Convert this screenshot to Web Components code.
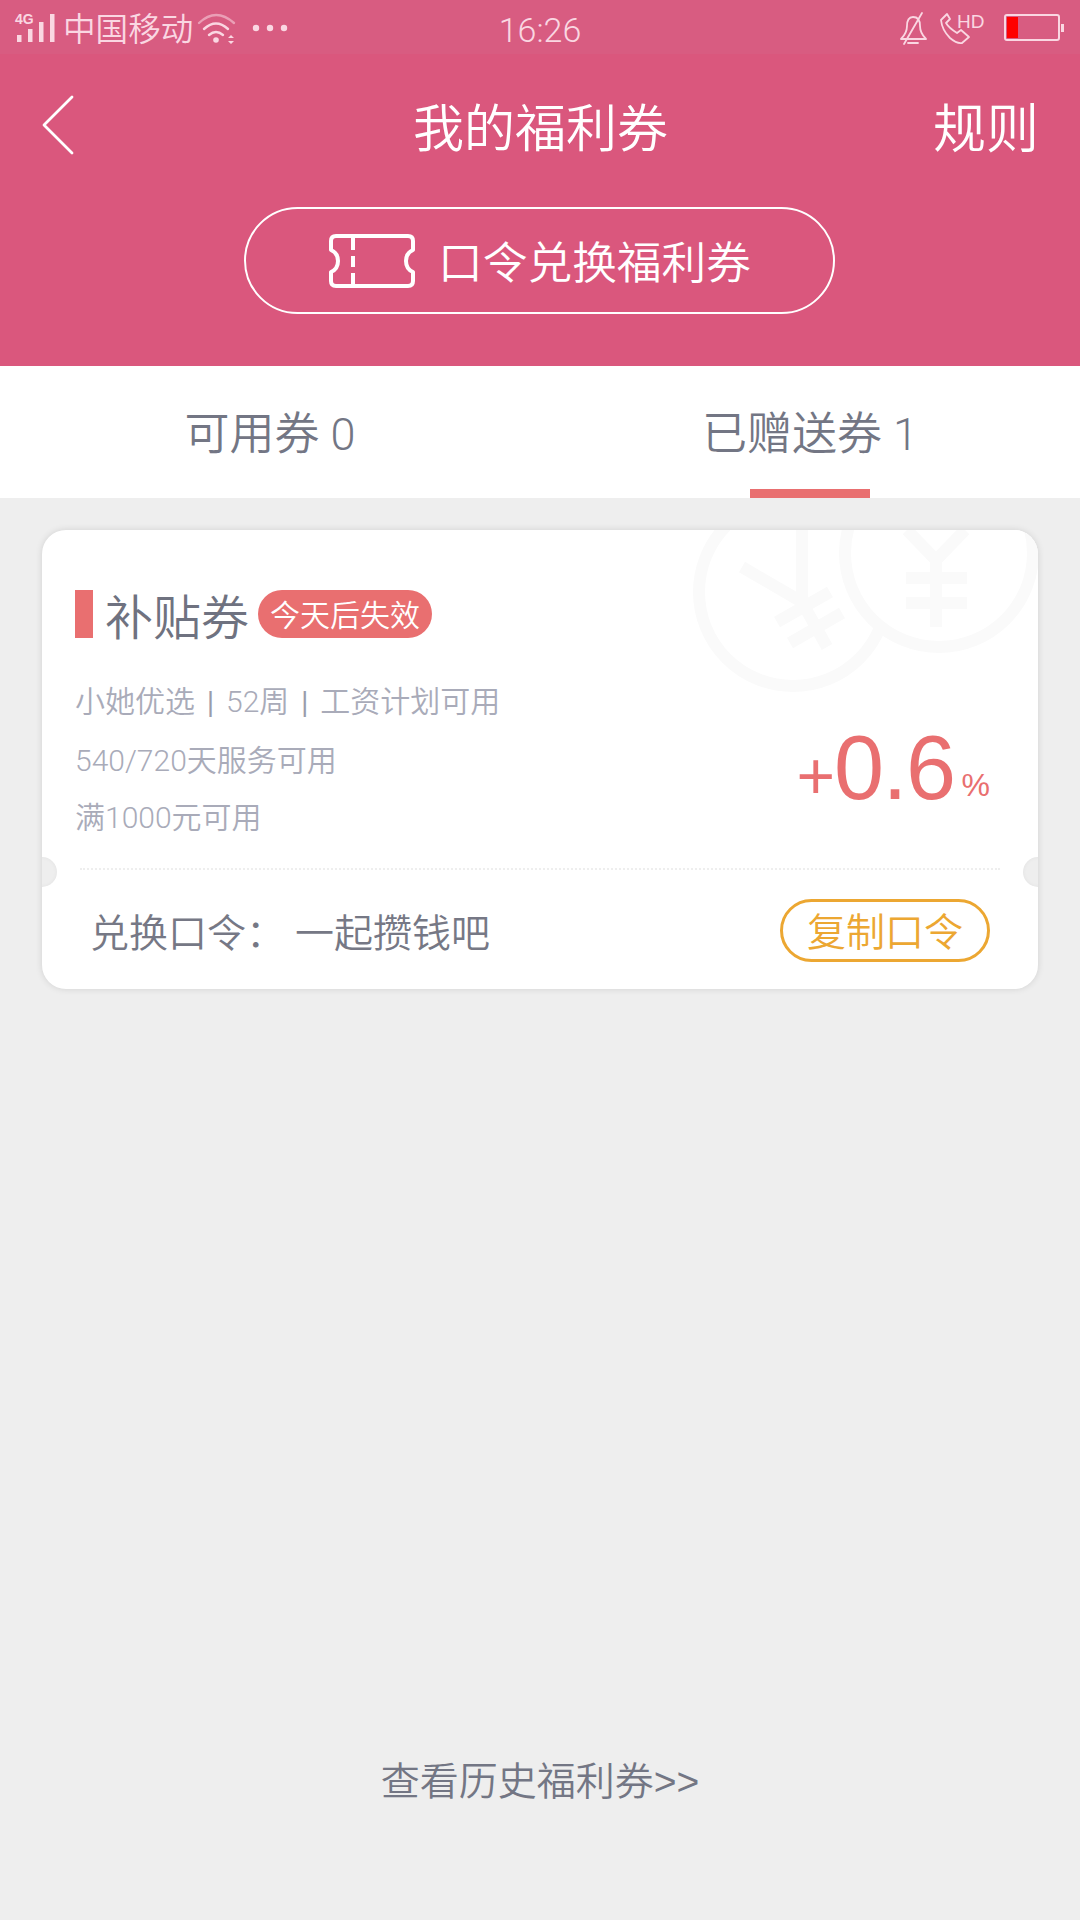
<!DOCTYPE html>
<html lang="zh"><head><meta charset="utf-8"><title>我的福利券</title>
<style>
html,body{margin:0;padding:0;background:#eeeeee}
body{width:1080px;height:1920px;overflow:hidden;font-family:"Noto Sans CJK SC","Noto Sans",sans-serif}
</style></head><body>
<coupon-page>
  <page-header title-text="我的福利券" action="规则" redeem="口令兑换福利券"></page-header>
  <tab-bar></tab-bar>
  <coupon-card></coupon-card>
  <history-link>查看历史福利券&gt;&gt;</history-link>
</coupon-page>
<script>
const def=(name,html)=>customElements.define(name,class extends HTMLElement{
  constructor(){super();this.attachShadow({mode:'open'}).innerHTML=typeof html==='function'?html(this):html}
});
const CJK='"Noto Sans CJK SC",sans-serif';
const MIX='Roboto,"Noto Sans CJK SC",sans-serif';
def('coupon-page',`<style>:host{display:flex;flex-direction:column;width:1080px;height:1920px}</style><slot></slot>`);

def('status-bar',`<style>
:host{display:grid;grid-template-columns:1fr auto 1fr;align-items:center;height:54px;background:#d85c81;color:#fad7e2}
.l,.r{display:flex;align-items:center;height:54px}
.r{justify-content:flex-end}
.car{font:350 32.6px/54px ${CJK};margin:0 0 0 8px;width:128px;white-space:nowrap}
.t{font:300 34px/54px Roboto,"Liberation Sans",sans-serif;position:relative;top:3px}
svg{display:block;flex:none;overflow:visible}
</style>
<div class="l">
 <svg width="55" height="54" viewBox="0 0 55 54" fill="currentColor"><text x="15" y="24" font-family="Liberation Sans" font-size="14" font-weight="700">4G</text><rect x="17" y="35" width="4.5" height="7"/><rect x="28" y="29" width="4.5" height="13"/><rect x="39" y="22" width="4.5" height="20"/><rect x="50" y="14" width="4.5" height="28"/></svg>
 <span class="car">中国移动</span>
 <svg style="margin-left:7px" width="40" height="54" viewBox="200 0 40 54" fill="none" stroke="currentColor" stroke-width="2.4" stroke-linecap="round"><path d="M201 23Q218 7 236 23" opacity=".55"/><path d="M206 29Q218 18 230 29"/><path d="M211 35Q218 29 225 35"/><circle cx="218" cy="40" r="2.8" fill="currentColor" stroke="none"/><path d="M230 38h6l-3-3zM230 41h6l-3 3z" fill="currentColor" stroke="none"/></svg>
 <svg style="margin-left:15px" width="34" height="54" viewBox="253 0 34 54" fill="currentColor"><circle cx="256" cy="28" r="3.2"/><circle cx="270" cy="28" r="3.2"/><circle cx="284" cy="28" r="3.2"/></svg>
</div>
<div class="t">16:26</div>
<div class="r">
 <svg width="30" height="54" viewBox="899 0 30 54" fill="none" stroke="currentColor" stroke-width="1.8" stroke-linejoin="round" stroke-linecap="round"><path d="M902 39Q908 33 908 26Q908 17 914 17Q921 17 921 26Q921 33 927 39Z"/><path d="M909 43h10"/><path d="M905 44L923 13"/></svg>
 <svg style="margin-left:12px" width="42" height="54" viewBox="941 0 42 54" fill="none" stroke="currentColor" stroke-width="1.8" stroke-linejoin="round"><path d="M948 14L942 20Q943 30 951 38Q958 44 963 43L970 37L962 30L958 33Q950 28 947 23L951 19Z"/><text x="958" y="28" fill="currentColor" stroke="none" font-family="Liberation Sans" font-size="19">HD</text></svg>
 <svg style="margin:0 14px 0 22px" width="62" height="54" viewBox="1004 0 62 54"><rect x="1005" y="15" width="54" height="25" rx="2" fill="none" stroke="#fad7e2" stroke-width="2"/><rect x="1007" y="17" width="11" height="21" fill="#ff0000"/><rect x="1061" y="24" width="3" height="8" fill="#fad7e2"/></svg>
</div>`);

def('page-header',h=>`<style>
:host{display:block;background:#da577d;color:#fff;height:366px}
.nav{display:grid;grid-template-columns:1fr auto 1fr;align-items:center;height:142px;padding:0 41px 0 42px}
h1{margin:0;font:350 51px/1 ${CJK}}
.rule{justify-self:end;font:350 53px/1 ${CJK}}
svg{display:block}
.redeem{box-sizing:border-box;width:591px;height:107px;margin:11px 0 0 244px;border:2px solid #fff;border-radius:54px;display:flex;align-items:center;justify-content:center;gap:22px;font:350 44.7px/1 ${CJK}}
</style>
<status-bar></status-bar>
<div class="nav">
 <svg width="32" height="60" viewBox="0 0 32 60" fill="none" stroke="#fff" stroke-width="2.8" stroke-linecap="round" stroke-linejoin="round"><path d="M30 2L2 30L30 58"/></svg>
 <h1>${h.getAttribute('title-text')}</h1>
 <span class="rule">${h.getAttribute('action')}</span>
</div>
<div class="redeem">
 <svg width="88" height="56" viewBox="0 0 88 56" fill="none" stroke="#fff" stroke-width="4" stroke-linejoin="round"><path d="M8 3H80Q85 3 85 8V17Q78 20 78 28Q78 36 85 39V48Q85 53 80 53H8Q3 53 3 48V39Q10 36 10 28Q10 20 3 17V8Q3 3 8 3Z"/><path d="M25 4V17M25 23V34M25 40V52"/></svg>
 <span>${h.getAttribute('redeem')}</span>
</div>`);

def('tab-bar',`<style>
:host{display:grid;grid-template-columns:1fr 1fr;height:132px;background:#fff;color:#737684;font:350 45px/1 ${MIX}}
.tab{position:relative;display:flex;align-items:center;justify-content:center;box-sizing:border-box;padding-top:4px}
.on::after{content:"";position:absolute;left:210px;bottom:0;width:120px;height:9px;background:#e96f70}
.n{white-space:pre}
</style>
<div class="tab"><span class="n">可用券 0</span></div>
<div class="tab on"><span class="n">已赠送券 1</span></div>`);

def('coupon-card',`<style>
:host{display:block;position:relative;box-sizing:border-box;width:996px;height:459px;margin:32px 0 0 42px;background:#fff;border-radius:24px;box-shadow:0 0 7px rgba(0,0,0,.12);color:#737684;overflow:hidden}
.coins{position:absolute;left:0;top:0;pointer-events:none}
.main{position:relative;box-sizing:border-box;height:339px;padding:60px 0 0 33px;display:flex;justify-content:space-between}
.head{display:flex;align-items:center;height:48px}
.bar{width:18px;height:48px;background:#e96f70}
.name{font:350 48px/48px ${CJK};margin:0 9px 0 12px;color:#6f7280}
.badge{height:48px;width:174px;border-radius:24px;background:#e96f70;color:#fff;font:350 30px/46px ${CJK};text-align:center}
.lines{margin:36px 0 0;padding:0;list-style:none;color:#a9abb9;font:350 30px/56px ${MIX}}
.lines li{white-space:nowrap;height:57px}
.lines li:first-child{height:59px}
.pipe{font:400 27px/1 "Liberation Sans",sans-serif;margin:0 12px;color:#9a9cab;vertical-align:1px}
.rate{align-self:flex-start;margin:128px 48px 0 0;display:flex;align-items:baseline;color:#e96f70;font-family:"Liberation Sans",sans-serif;line-height:100px}
.p{font-size:66px}.v{font-size:90px;letter-spacing:-1.5px;margin-left:-1px}.u{font-size:32px;margin-left:7px;transform:translateY(-3px)}
.foot{position:relative;box-sizing:border-box;height:120px;padding:0 48px 0 48px;display:flex;align-items:center;justify-content:space-between}
.foot::before{content:"";position:absolute;left:38px;right:38px;top:-1px;border-top:2px dotted #eeeeee}
.code{font:350 39px/1 ${CJK};color:#767885;display:flex;gap:10px;margin-top:3px}
.copy{box-sizing:border-box;width:210px;height:63px;border:3px solid #eca732;border-radius:32px;color:#eca732;font:350 39px/54px ${CJK};text-align:center;margin-top:3px}
.notch{position:absolute;top:327px;width:30px;height:30px;border-radius:50%;background:#eeeeee;box-shadow:inset 0 0 4px rgba(0,0,0,.05)}
</style>
<svg class="coins" width="996" height="459" viewBox="42 530 996 459" fill="none" stroke="#fafafa" stroke-width="12"><circle cx="793" cy="592" r="94"/><path d="M742 567L802 602M802 530V602L827 647M777 622L830 592M790 643L842 613"/><circle cx="939" cy="553" r="94" fill="#fff"/><path d="M907 530L936 560L965 530M936 560V627M906 578H967M906 603H967"/></svg>
<div class="main">
 <div>
  <div class="head"><span class="bar"></span><span class="name">补贴券</span><span class="badge">今天后失效</span></div>
  <ul class="lines"><li>小她优选<span class="pipe">|</span>52周<span class="pipe">|</span>工资计划可用</li><li>540/720天服务可用</li><li>满1000元可用</li></ul>
 </div>
 <div class="rate"><span class="p">+</span><span class="v">0.6</span><span class="u">%</span></div>
</div>
<div class="foot">
 <div class="code"><span>兑换口令：</span><span>一起攒钱吧</span></div>
 <div class="copy">复制口令</div>
</div>
<span class="notch" style="left:-15px"></span><span class="notch" style="right:-15px"></span>`);

def('history-link',`<style>
:host{display:block;margin-top:auto;height:158px;text-align:center;color:#737684;font:350 39px/1 "Liberation Sans","Noto Sans CJK SC",sans-serif}
</style><slot></slot>`);
</script>
</body></html>
